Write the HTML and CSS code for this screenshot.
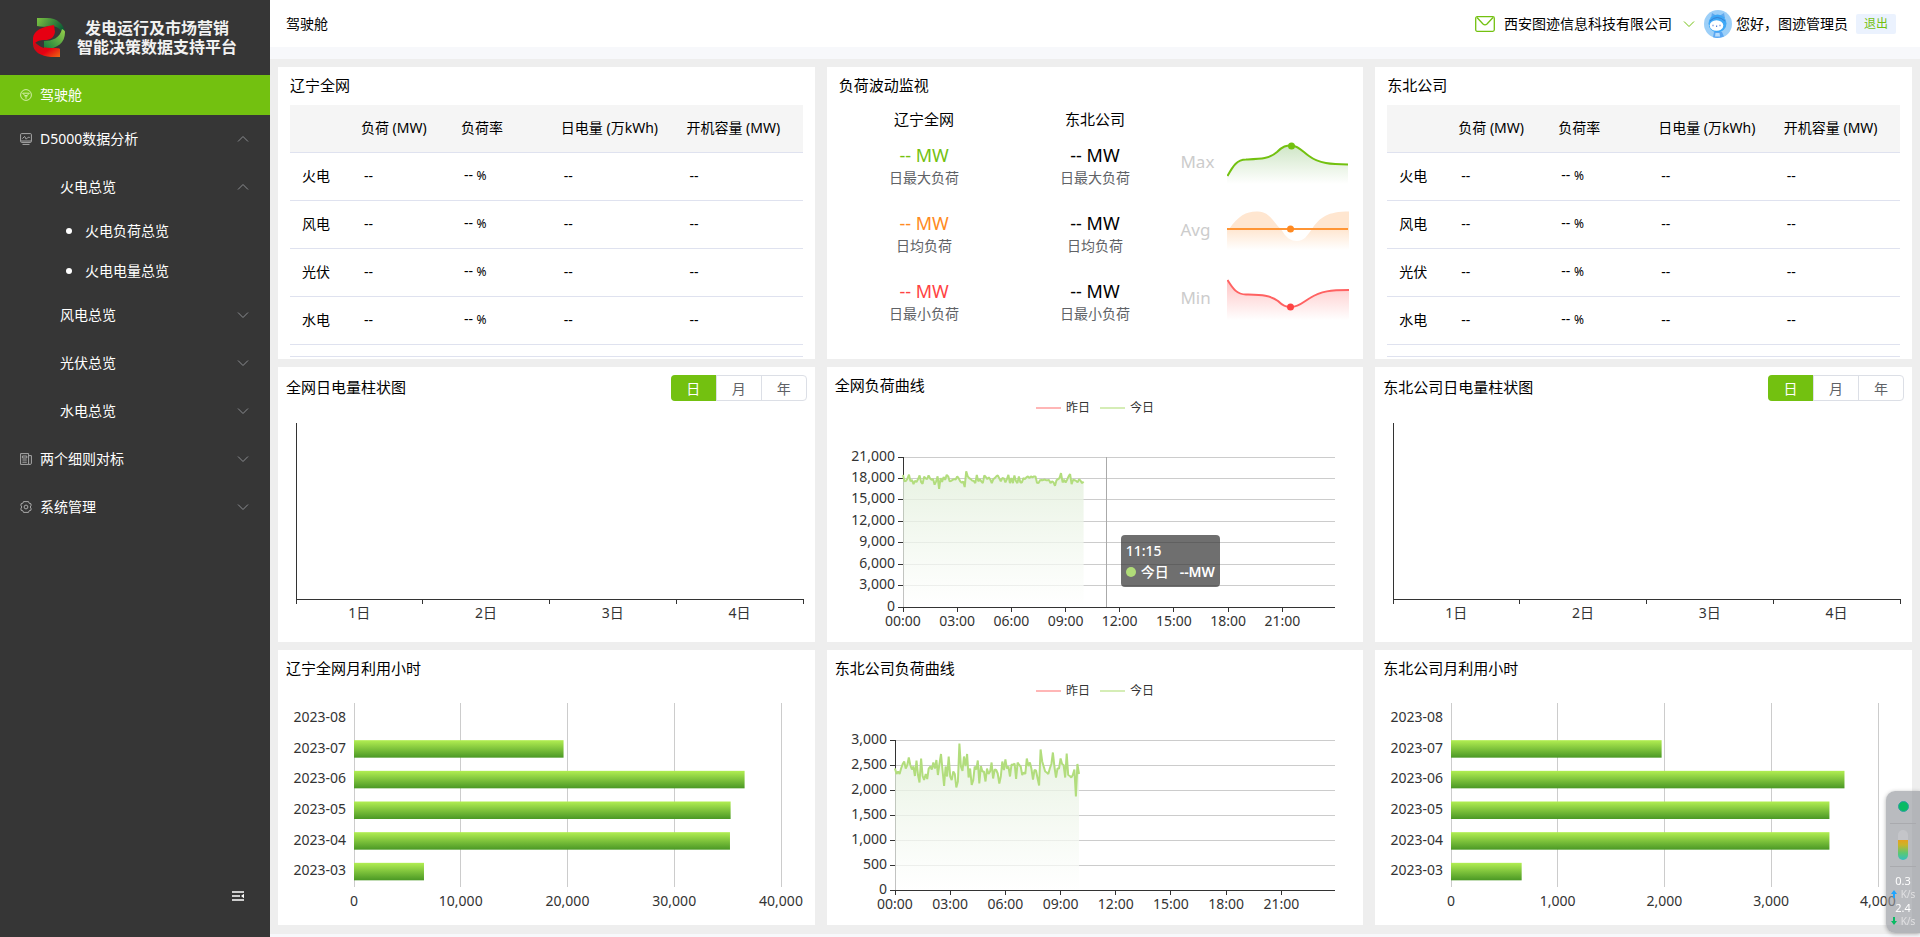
FILE: index.html
```html
<!DOCTYPE html>
<html lang="zh-CN">
<head>
<meta charset="utf-8">
<meta name="viewport" content="width=device-width, initial-scale=1">
<title>驾驶舱</title>
<link rel="stylesheet" href="styles.css">
</head>
<body>
<svg class="defs" width="0" height="0" aria-hidden="true">
  <defs>
    <linearGradient id="bar-fill" x1="0" y1="0" x2="0" y2="1"><stop offset="0" stop-color="#b2ee52"/><stop offset="1" stop-color="#4a9825"/></linearGradient>
    <linearGradient id="area-fill" x1="0" y1="0" x2="0" y2="1"><stop offset="0" stop-color="#e2efdb" stop-opacity="0.8"/><stop offset="1" stop-color="#ffffff" stop-opacity="0.7"/></linearGradient>
    <linearGradient id="max-fill" x1="0" y1="0" x2="0" y2="1"><stop offset="0" stop-color="#cfe6c6"/><stop offset="1" stop-color="#ffffff"/></linearGradient>
    <linearGradient id="avg-fill" x1="0" y1="0" x2="0" y2="1"><stop offset="0" stop-color="#ffe6d0"/><stop offset="1" stop-color="#ffffff"/></linearGradient>
    <linearGradient id="min-fill" x1="0" y1="0" x2="0" y2="1"><stop offset="0" stop-color="#ffc4c4"/><stop offset="1" stop-color="#ffffff"/></linearGradient>
    <symbol id="up" viewBox="0 0 12 8"><path d="M1 6.5 6 1.5l5 5" fill="none" stroke="currentColor"/></symbol>
    <symbol id="down" viewBox="0 0 12 8"><path d="M1 1.5l5 5 5-5" fill="none" stroke="currentColor"/></symbol>
  </defs>
</svg>
<div class="app">
  <aside class="sidebar">
    <div class="brand">
      <svg class="brand-mark" viewBox="0 0 32 40" aria-hidden="true">
        <defs>
          <linearGradient id="g1" x1="0" y1="0" x2="1" y2="0.4"><stop offset="0" stop-color="#7cc242"/><stop offset="1" stop-color="#0b5a35"/></linearGradient>
          <linearGradient id="g2" x1="0" y1="1" x2="1" y2="0"><stop offset="0" stop-color="#0f7a3c"/><stop offset="1" stop-color="#9ad04a"/></linearGradient>
          <linearGradient id="g3" x1="0" y1="0" x2="1" y2="1"><stop offset="0" stop-color="#b5161a"/><stop offset="0.6" stop-color="#e60012"/><stop offset="1" stop-color="#ee6a12"/></linearGradient>
        </defs>
        <path d="M4 0H14C24 0 31 6 32 15V19C29 12 25 8 18 8C12 9 8 9 4 8Z" fill="url(#g1)"/>
        <path d="M32 14C32 25 25 30 11 32V23C19 23 27 20 29 11C31 12 32 13 32 14Z" fill="url(#g2)"/>
        <path d="M0 20C1 26 8 30 18 30C23 30 27 30 27 31V39H18C8 38 0 34 0 26Z" fill="url(#g3)"/>
        <path d="M21 7C9 9 1 12 0 20V27C3 23 7 22 12 22C17 22 21 20 22 14Z" fill="#e60012"/>
        <path d="M4 25C6 28 8 29 11 30V23C8 23 6 24 4 25Z" fill="#363636"/>
      </svg>
      <p class="brand-name">发电运行及市场营销<br>智能决策数据支持平台</p>
    </div>
    <nav class="menu" aria-label="主菜单">
      <a class="item item-active" href="#">
        <svg class="icon" viewBox="0 0 12 12"><g fill="none" stroke="currentColor"><circle cx="6" cy="6" r="5.4"/><path d="M2.6 4.2h6.8L7 6.6H5zM6 6.6v3.2M5 6.2v1.4M7 6.2v1.4"/></g></svg>
        <span class="label">驾驶舱</span>
      </a>
      <button class="item" type="button" aria-expanded="true">
        <svg class="icon" viewBox="0 0 12 12"><g fill="none" stroke="currentColor"><rect x="0.6" y="0.6" width="10.8" height="8.8" rx="1"/><path d="M2.4 5.6 4.6 3.4l1.6 2.8 2-2 1.6.2M2.5 11.4h7M1 8h10"/></g></svg>
        <span class="label">D5000数据分析</span><svg class="arrow"><use href="#up"/></svg>
      </button>
      <button class="item item-sub" type="button" aria-expanded="true"><span class="label">火电总览</span><svg class="arrow"><use href="#up"/></svg></button>
      <a class="item item-leaf" href="#"><span class="label">火电负荷总览</span></a>
      <a class="item item-leaf" href="#"><span class="label">火电电量总览</span></a>
      <button class="item item-sub" type="button" aria-expanded="false"><span class="label">风电总览</span><svg class="arrow"><use href="#down"/></svg></button>
      <button class="item item-sub" type="button" aria-expanded="false"><span class="label">光伏总览</span><svg class="arrow"><use href="#down"/></svg></button>
      <button class="item item-sub" type="button" aria-expanded="false"><span class="label">水电总览</span><svg class="arrow"><use href="#down"/></svg></button>
      <button class="item" type="button" aria-expanded="false">
        <svg class="icon" viewBox="0 0 12 12"><g fill="none" stroke="currentColor"><path d="M.6.6h8v10.8h-8zM8.6 2.6h2.8v7.6q0 1.2-1.2 1.2H8.6M2.4 3h4.4v2H2.4zM2.4 7h4.4M2.4 9.2h4.4"/></g></svg>
        <span class="label">两个细则对标</span><svg class="arrow"><use href="#down"/></svg>
      </button>
      <button class="item" type="button" aria-expanded="false">
        <svg class="icon" viewBox="0 0 12 12"><g fill="none" stroke="currentColor"><path d="M3.500.6h5l.6 1.600 1.900.6v2L10.200 6l.8 1.200v2l-1.900.6-.6 1.600h-5l-.6-1.600L1 9.200v-2L1.800 6 1 4.800v-2l1.900-.6z"/><circle cx="6" cy="6" r="1.900"/></g></svg>
        <span class="label">系统管理</span><svg class="arrow"><use href="#down"/></svg>
      </button>
    </nav>
    <button class="fold" type="button" aria-label="收起菜单">
      <svg viewBox="0 0 14 10" width="14" height="10"><path d="M1 1h12M1 5h8M1 9h12" stroke="#fff" stroke-width="1.400"/><path d="M13 2.800v4.400L10 5z" fill="#fff"/></svg>
    </button>
  </aside>

  <div class="page">
    <header class="topbar">
      <h1 class="crumb">驾驶舱</h1>
      <div class="account">
        <svg class="mail" viewBox="0 0 20 16" role="img" aria-label="消息"><g fill="none" stroke="#73c110" stroke-width="1.300"><rect x="0.700" y="0.700" width="18.600" height="14.600" rx="1.500"/><path d="M2 1.500 8 8q2 1.800 4 0l6-6.500"/></g></svg>
        <button class="company" type="button">西安图迹信息科技有限公司<svg class="arrow arrow-green"><use href="#down"/></svg></button>
        <svg class="avatar" viewBox="0 0 28 28" aria-hidden="true">
          <circle cx="14" cy="14" r="14" fill="#9ccff8"/>
          <path d="M7 8 8 3l4 2.500h4L20 3l1 5z" fill="#62a9ee"/>
          <circle cx="13.500" cy="13.500" r="9" fill="#3ea8f6"/>
          <path d="M6 11q7-7 15 0" stroke="#3a7fd0" fill="none"/>
          <ellipse cx="12.500" cy="15.500" rx="6.800" ry="5.300" fill="#fff"/>
          <path d="M8.500 15.500h1M12 16.300h1.200M15.500 15.500h1" stroke="#5b7fd8" stroke-width="1.400"/>
          <path d="M10 22h8l2 4.500q-6 2.500-11 .8z" fill="#5aa7f3"/><path d="M11.500 23h4l.6 3.500h-5z" fill="#b8dcfb"/>
        </svg>
        <span class="hello">您好，图迹管理员</span>
        <button class="logout" type="button">退出</button>
      </div>
    </header>

    <main class="board">
      <section class="card card-wide">
        <h2 class="title">辽宁全网</h2>
        <table class="grid">
          <thead><tr><th class="c-name"></th><th class="c-load">负荷 (MW)</th><th class="c-rate">负荷率</th><th class="c-energy">日电量 (万kWh)</th><th class="c-cap">开机容量 (MW)</th></tr></thead>
          <tbody>
            <tr><td>火电</td><td class="v">--</td><td class="v">-- <small>%</small></td><td class="v">--</td><td class="v">--</td></tr>
            <tr><td>风电</td><td class="v">--</td><td class="v">-- <small>%</small></td><td class="v">--</td><td class="v">--</td></tr>
            <tr><td>光伏</td><td class="v">--</td><td class="v">-- <small>%</small></td><td class="v">--</td><td class="v">--</td></tr>
            <tr><td>水电</td><td class="v">--</td><td class="v">-- <small>%</small></td><td class="v">--</td><td class="v">--</td></tr>
            <tr class="blank"><td colspan="5"></td></tr>
          </tbody>
        </table>
      </section>

      <section class="card card-wide">
        <h2 class="title">负荷波动监视</h2>
        <div class="monitor">
          <div class="metrics">
            <h3 class="metrics-head">辽宁全网</h3>
            <p class="metric"><b class="num green">-- MW</b><span>日最大负荷</span></p>
            <p class="metric"><b class="num orange">-- MW</b><span>日均负荷</span></p>
            <p class="metric"><b class="num red">-- MW</b><span>日最小负荷</span></p>
          </div>
          <div class="metrics">
            <h3 class="metrics-head">东北公司</h3>
            <p class="metric"><b class="num">-- MW</b><span>日最大负荷</span></p>
            <p class="metric"><b class="num">-- MW</b><span>日均负荷</span></p>
            <p class="metric"><b class="num">-- MW</b><span>日最小负荷</span></p>
          </div>
          <div class="sparks">
            <div class="spark"><span>Max</span>
              <svg viewBox="0 0 122 44"><path d="M0 36C6 26 10 19.500 19 19.500C34 19 42 19 50 12C56 6 59 5.500 64.500 5.500C72 6 76 12 82 16C92 23.500 104 24.500 121 24.500V44H0Z" fill="url(#max-fill)"/><path d="M.5 36C6 26 10 19.500 19 19.500C34 19 42 19 50 12C56 6 59 5.500 64.500 5.500C72 6 76 12 82 16C92 23.500 104 24.500 121 24.500" fill="none" stroke="#73c110" stroke-width="2"/><circle cx="64.500" cy="6" r="3.500" fill="#73c110"/></svg></div>
            <div class="spark"><span>Avg</span>
              <svg viewBox="0 0 122 44"><rect y="21" width="122" height="21" fill="url(#avg-fill)"/><path d="M2 21C12 7 20 3 31 3.500C44 4 47 16 54 21ZM85 21C93 9 101 3.500 122 3.500V21Z" fill="#ffe6d0"/><path d="M54 21C59 30 64 33 70 33C77 33 80 28 85 21Z" fill="#fff"/><path d="M0 21H121" stroke="#ff9535" stroke-width="2"/><circle cx="63.500" cy="21" r="3.500" fill="#ff8a22"/></svg></div>
            <div class="spark"><span>Min</span>
              <svg viewBox="0 0 122 44"><path d="M0 4C6 13 10 18.500 19 18.500C34 19 43 19 51 25C56 30 59 31 64 31C72 31 76 26 83 22C94 15 104 14 122 14V44H0Z" fill="url(#min-fill)"/><path d="M.5 4C6 13 10 18.500 19 18.500C34 19 43 19 51 25C56 30 59 31 64 31C72 31 76 26 83 22C94 15 104 14 122 14" fill="none" stroke="#ff6262" stroke-width="2"/><circle cx="63.500" cy="31" r="3.500" fill="#ff4343"/></svg></div>
          </div>
        </div>
      </section>

      <section class="card card-wide">
        <h2 class="title">东北公司</h2>
        <table class="grid">
          <thead><tr><th class="c-name"></th><th class="c-load">负荷 (MW)</th><th class="c-rate">负荷率</th><th class="c-energy">日电量 (万kWh)</th><th class="c-cap">开机容量 (MW)</th></tr></thead>
          <tbody>
            <tr><td>火电</td><td class="v">--</td><td class="v">-- <small>%</small></td><td class="v">--</td><td class="v">--</td></tr>
            <tr><td>风电</td><td class="v">--</td><td class="v">-- <small>%</small></td><td class="v">--</td><td class="v">--</td></tr>
            <tr><td>光伏</td><td class="v">--</td><td class="v">-- <small>%</small></td><td class="v">--</td><td class="v">--</td></tr>
            <tr><td>水电</td><td class="v">--</td><td class="v">-- <small>%</small></td><td class="v">--</td><td class="v">--</td></tr>
            <tr class="blank"><td colspan="5"></td></tr>
          </tbody>
        </table>
      </section>

      <section class="card">
        <div class="head">
          <h2 class="title">全网日电量柱状图</h2>
          <div class="segment"><button class="seg seg-on" type="button">日</button><button class="seg" type="button">月</button><button class="seg" type="button">年</button></div>
        </div>
        <div class="chart chart-daily" data-chart="daily"></div>
      </section>

      <section class="card">
        <h2 class="title">全网负荷曲线</h2>
        <div class="legend"><span class="key key-red">昨日</span><span class="key key-green">今日</span></div>
        <div class="chart chart-load" data-chart="load" data-series="grid">
          <div class="tooltip" id="tip"><span>11:15</span><span class="tip-row"><i class="tip-dot"></i>今日<b>--MW</b></span></div>
        </div>
      </section>

      <section class="card">
        <div class="head">
          <h2 class="title">东北公司日电量柱状图</h2>
          <div class="segment"><button class="seg seg-on" type="button">日</button><button class="seg" type="button">月</button><button class="seg" type="button">年</button></div>
        </div>
        <div class="chart chart-daily" data-chart="daily"></div>
      </section>

      <section class="card">
        <h2 class="title">辽宁全网月利用小时</h2>
        <div class="chart chart-hours" data-chart="hours" data-series="grid"></div>
      </section>

      <section class="card">
        <h2 class="title">东北公司负荷曲线</h2>
        <div class="legend"><span class="key key-red">昨日</span><span class="key key-green">今日</span></div>
        <div class="chart chart-load" data-chart="load" data-series="company"></div>
      </section>

      <section class="card">
        <h2 class="title">东北公司月利用小时</h2>
        <div class="chart chart-hours" data-chart="hours" data-series="company"></div>
      </section>
    </main>
  </div>

  <div class="widget">
    <i class="w-dot"></i>
    <div class="w-load"><i class="w-pill"></i></div>
    <div class="w-speeds">
      <span class="w-num">0.3</span>
      <span class="w-unit"><svg viewBox="0 0 6 8" width="6" height="8"><path d="M3 0 6 4H4v4H2V4H0z" fill="#1ea5ff"/></svg>K/s</span>
      <span class="w-num">2.4</span>
      <span class="w-unit"><svg viewBox="0 0 6 8" width="6" height="8"><path d="M3 8 6 4H4V0H2v4H0z" fill="#09bb63"/></svg>K/s</span>
    </div>
  </div>
</div>
<script src="charts.js"></script>
</body>
</html>
```

FILE: styles.css
```css
* { box-sizing: border-box; }
body {
  margin: 0;
  background: #f7f8fb;
  color: #000;
  font: 14px/20px "Noto Sans", "Noto Sans CJK SC", sans-serif;
}
h1, h2, h3, p { margin: 0; font-weight: 400; }
button { font: inherit; color: inherit; background: none; border: 0; padding: 0; cursor: pointer; }
a { color: inherit; text-decoration: none; }
.defs { position: absolute; }

.app { display: flex; min-height: 100vh; }

/* Sidebar */
.sidebar { display: flex; flex-direction: column; flex: 0 0 270px; background: #363636; color: #fff; }
.brand { display: flex; align-items: center; gap: 12px; height: 75px; padding-left: 33px; }
.brand-mark { flex: none; width: 32px; height: 40px; }
.brand-name { font-size: 16px; line-height: 19px; font-weight: 700; text-align: center; white-space: nowrap; color: #f2f2f2; }
.menu { display: flex; flex-direction: column; }
.item { display: flex; align-items: center; gap: 8px; height: 48px; padding: 0 20px; text-align: left; }
.item-active { height: 40px; background: #73c110; }
.item-sub { padding-left: 60px; }
.item-leaf { height: 40px; padding-left: 66px; gap: 13px; }
.item-leaf::before { content: ""; width: 6px; height: 6px; border-radius: 3px; background: #fff; }
.icon { width: 12px; height: 12px; color: #a8a8a8; }
.item-active .icon { color: #d3efa9; }
.label { flex: 1; }
.arrow { width: 12px; height: 8px; margin-right: 1px; color: #8b8d91; }
.fold { align-self: flex-end; display: flex; margin: auto 25px 36px 0; }

/* Top bar */
.page { flex: 1; min-width: 0; display: flex; flex-direction: column; }
.topbar { display: flex; align-items: center; justify-content: space-between; height: 47px; margin-bottom: 12px; padding: 0 24px 0 16px; background: #fff; }
.crumb { font-size: 14px; }
.account { display: flex; align-items: center; }
.mail { width: 20px; height: 16px; margin-right: 9px; }
.company { display: flex; align-items: center; gap: 11px; }
.arrow-green { color: #73c110; }
.avatar { width: 28px; height: 28px; margin: 0 4px 0 8px; }
.logout { width: 40px; height: 20px; margin-left: 8px; border-radius: 2px; background: #ebf2fe; color: #73c110; font-size: 12px; line-height: 20px; }

/* Dashboard */
.board { display: grid; grid-template-columns: repeat(3, minmax(0, 1fr)); gap: 8px 12px; padding: 8px 8px 9px; background: #eee; }
.card { padding: 8px 0 0; background: #fff; overflow: hidden; }
.title { padding: 0 8px; font-size: 15px; line-height: 20px; }
.card-wide { padding: 8px 12px 0; }
.card-wide .title { padding: 0; margin-bottom: 10px; }
.head { display: flex; align-items: center; justify-content: space-between; padding-right: 8px; }
.head .title { padding-bottom: 2px; }

.grid { width: 100%; margin-bottom: 2px; table-layout: fixed; border-collapse: separate; border-spacing: 0; }
.grid th, .grid td { height: 48px; padding: 0 0 2px 12px; border-bottom: 1px solid #dfe2ef; text-align: left; font-weight: 400; white-space: nowrap; }
.grid th { background: #f5f5f5; }
.grid .v { padding-left: 15px; }
.grid small { font-size: 12px; }
.grid .blank td { height: 12px; }
.c-name { width: 11.5%; }
.c-load { width: 19.5%; }
.c-rate { width: 19.5%; }
.c-energy { width: 24.5%; }
.c-cap { width: 25%; }

.monitor { display: grid; grid-template-columns: repeat(3, minmax(0, 1fr)); padding-bottom: 12px; }
.metrics { text-align: center; }
.metrics-head { margin-bottom: 10px; font-size: 15px; line-height: 28px; }
.metric { display: flex; flex-direction: column; height: 68px; color: #606266; line-height: 22px; }
.num { color: #000; font-size: 18px; line-height: 24px; font-weight: 400; }
.green { color: #73c110; }
.orange { color: #ff8a22; }
.red { color: #ff4343; }
.sparks { display: flex; flex-direction: column; gap: 24px; padding: 35px 2px 0 0; }
.spark { display: flex; align-items: center; justify-content: space-between; height: 44px; color: #ccc; font-size: 17px; }
.spark svg { width: 122px; height: 44px; }

.segment { display: flex; border: 1px solid #dcdfe6; border-radius: 4px; background: #fff; }
.seg { width: 45px; height: 24px; padding-top: 2px; line-height: 22px; color: #606266; }
.seg + .seg { border-left: 1px solid #dcdfe6; }
.seg-on { margin: -1px 0 -1px -1px; height: 26px; border-radius: 4px 0 0 4px; background: #73c110; color: #fff; }

.legend { display: flex; justify-content: center; gap: 10px; padding-top: 4px; color: #333; font-size: 12px; line-height: 18px; }
.key { display: flex; align-items: center; gap: 5px; }
.key::before { content: ""; width: 25px; height: 2px; background: currentColor; }
.key-red::before { background: #ffb6b6; }
.key-green::before { background: #d5edb6; }

.chart { position: relative; }
.chart svg { display: block; width: 100%; height: 100%; }
.chart text { fill: #333; font-size: 14px; }
.chart-daily { height: 241px; }
.chart-load { height: 225px; }
.chart-hours { height: 247px; }
.axis { fill: none; stroke: #333; shape-rendering: crispEdges; }
.rule { fill: none; stroke: #ccc; shape-rendering: crispEdges; }
.pointer { stroke: #aaa; shape-rendering: crispEdges; }
.curve { fill: none; stroke: #b2dd7d; stroke-width: 2; stroke-linejoin: bevel; }

.tooltip { position: absolute; top: 118px; display: flex; flex-direction: column; padding: 5px; border-radius: 4px; background: rgba(50, 50, 50, 0.7); color: #fff; line-height: 21px; font-weight: 500; white-space: nowrap; }
.tip-row { display: flex; align-items: center; }
.tip-row b { margin-left: 11px; font-weight: 600; }
.tip-dot { width: 10px; height: 10px; margin-right: 5px; border-radius: 5px; background: #b0dc78; }

/* Floating network monitor */
.widget { position: fixed; right: 0; bottom: 4px; display: flex; flex-direction: column; align-items: center; width: 34px; padding: 10px 0 5px; border-radius: 9px 0 0 9px; background: rgba(148, 150, 156, 0.65); box-shadow: 0 1px 4px rgba(0, 0, 0, 0.3); }
.w-dot { width: 11px; height: 11px; border: 1px solid #2f9fa0; border-radius: 6px; background: #09bb63; }
.w-load { display: flex; justify-content: center; width: 26px; margin: 11px 0 7px; padding: 6px 0; border: solid #a9aaae; border-width: 1px 0; }
.w-pill { width: 10px; height: 30px; border-radius: 5px; background: linear-gradient(#c4c5c9 0 10px, #e6a11f 10px, #c9b42a 15px, #5cc873 23px, #35bfc0 30px); }
.w-speeds { display: flex; flex-direction: column; align-items: center; font-size: 11px; line-height: 13px; color: #fff; }
.w-unit { display: flex; align-items: center; gap: 4px; line-height: 14px; font-size: 10px; color: #e0e0e2; }
```

FILE: charts.js
```js
const NS = "http://www.w3.org/2000/svg";

const MONTHS = ["2023-08", "2023-07", "2023-06", "2023-05", "2023-04", "2023-03"];

const HOURS = {
  grid: { max: 40000, values: [0, 19630, 36590, 35280, 35220, 6555] },
  company: { max: 4000, values: [0, 1973, 3686, 3545, 3545, 662] }
};

// Five-minute samples from 00:00, in tens of MW
const LOADS = {
  grid: {
    max: 21000, step: 3000, left: 76, pointer: 135,
    values: [1850, 1760, 1765, 1800, 1852, 1758, 1780, 1720, 1765, 1750, 1790, 1842, 1750, 1725, 1825, 1800,
      1790, 1842, 1800, 1782, 1790, 1712, 1760, 1828, 1655, 1805, 1750, 1820, 1780, 1850, 1828, 1758, 1765, 1782,
      1790, 1785, 1828, 1800, 1760, 1740, 1758, 1678, 1898, 1828, 1805, 1790, 1770, 1765, 1735, 1850, 1758, 1790,
      1758, 1735, 1842, 1820, 1790, 1815, 1785, 1735, 1790, 1805, 1828, 1842, 1800, 1758, 1805, 1800, 1745, 1790,
      1850, 1735, 1805, 1735, 1842, 1765, 1735, 1828, 1745, 1745, 1805, 1790, 1815, 1828, 1805, 1828, 1815, 1828,
      1828, 1740, 1735, 1775, 1780, 1775, 1785, 1775, 1775, 1780, 1735, 1760, 1745, 1697, 1775, 1790, 1805, 1875,
      1745, 1782, 1745, 1782, 1828, 1860, 1720, 1782, 1775, 1765, 1745, 1790, 1765, 1735, 1755]
  },
  company: {
    max: 3000, step: 500, left: 68,
    values: [243, 232, 237, 232, 243, 252, 257, 243, 250, 265, 250, 241, 247, 228, 259, 230, 215, 263, 228, 220,
      232, 222, 243, 247, 241, 255, 243, 260, 230, 253, 272, 240, 208, 247, 227, 267, 227, 220, 237, 232, 205, 217,
      293, 247, 238, 267, 248, 272, 225, 243, 210, 219, 247, 241, 259, 213, 248, 237, 237, 217, 243, 232, 237, 255,
      223, 241, 240, 233, 213, 227, 257, 240, 261, 243, 247, 227, 251, 250, 253, 222, 255, 250, 247, 230, 235, 232,
      263, 248, 255, 243, 221, 240, 239, 223, 209, 281, 257, 247, 237, 235, 232, 243, 252, 275, 247, 225, 243, 243,
      263, 252, 250, 225, 273, 230, 228, 225, 230, 241, 187, 252, 232]
  }
};

function add(svg, name, attrs, text) {
  const node = document.createElementNS(NS, name);
  for (const key in attrs) node.setAttribute(key, attrs[key]);
  if (text !== undefined) node.textContent = text;
  svg.appendChild(node);
}

const snap = v => Math.floor(v) + 0.5;

function drawDaily(svg, width) {
  const left = 18, right = width - 12, top = 22, bottom = 198;
  const slot = (right - left) / 4;
  add(svg, "path", { class: "axis", d: `M${snap(left)} ${top}V${bottom + 0.5}H${snap(right)}` });
  for (let i = 0; i <= 4; i++) {
    add(svg, "path", { class: "axis", d: `M${snap(left + slot * i)} ${bottom}v5` });
    if (i < 4) add(svg, "text", { x: left + slot * (i + 0.5), y: bottom + 19, "text-anchor": "middle" }, `${i + 1}日`);
  }
}

function drawHours(svg, width, key) {
  const { max, values } = HOURS[key];
  const left = 76, right = width - 34, top = 25, bottom = 209;
  const slot = (bottom - top) / values.length;
  for (let i = 0; i <= 4; i++) {
    const x = left + (right - left) * i / 4;
    add(svg, "path", { class: "rule", d: `M${snap(x)} ${top}V${bottom}` });
    add(svg, "text", { x, y: bottom + 19, "text-anchor": "middle" }, (max * i / 4).toLocaleString("en-US"));
  }
  values.forEach((v, i) => {
    const y = top + slot * i;
    add(svg, "text", { x: left - 8, y: y + 19, "text-anchor": "end" }, MONTHS[i]);
    if (v) add(svg, "rect", { x: left, y: y + 6.5, width: (right - left) * v / max, height: 17.5, fill: "url(#bar-fill)" });
  });
}

function drawLoad(svg, width, key) {
  const { max, step, left, values, pointer } = LOADS[key];
  const right = width - 29, top = 40, bottom = 190;
  const dx = (right - left) / 287;
  const px = i => left + dx * i;
  const py = v => bottom - (bottom - top) * v / max;
  for (let v = 0; v <= max; v += step) {
    const y = snap(py(v));
    if (v) add(svg, "path", { class: "rule", d: `M${left} ${y}H${right}` });
    add(svg, "path", { class: "axis", d: `M${left - 5} ${y}h5` });
    add(svg, "text", { x: left - 8, y: y + 3, "text-anchor": "end" }, v.toLocaleString("en-US"));
  }
  add(svg, "path", { class: "axis", d: `M${left + 0.5} ${top}V${bottom + 0.5}H${right}` });
  for (let h = 0; h < 24; h += 3) {
    const x = px(h * 12);
    add(svg, "path", { class: "axis", d: `M${snap(x)} ${bottom}v5` });
    add(svg, "text", { x, y: bottom + 19, "text-anchor": "middle" }, `${String(h).padStart(2, "0")}:00`);
  }
  const line = values.map((v, i) => `${px(i).toFixed(1)} ${py(v * (v > 1000 ? 10 : 10)).toFixed(1)}`).join("L");
  add(svg, "path", { fill: "url(#area-fill)", d: `M${left} ${bottom}L${line}V${bottom}Z` });
  add(svg, "path", { class: "curve", d: `M${line}` });
  if (pointer) {
    add(svg, "path", { class: "pointer", d: `M${snap(px(pointer))} ${top}V${bottom}` });
    document.getElementById("tip").style.left = `${Math.round(px(pointer)) + 15}px`;
  }
}

const DRAW = { daily: drawDaily, hours: drawHours, load: drawLoad };

function render() {
  document.querySelectorAll("[data-chart]").forEach(box => {
    const old = box.querySelector("svg");
    if (old) old.remove();
    const svg = document.createElementNS(NS, "svg");
    box.prepend(svg);
    DRAW[box.dataset.chart](svg, box.clientWidth, box.dataset.series);
  });
}

render();
window.addEventListener("resize", render);
```
